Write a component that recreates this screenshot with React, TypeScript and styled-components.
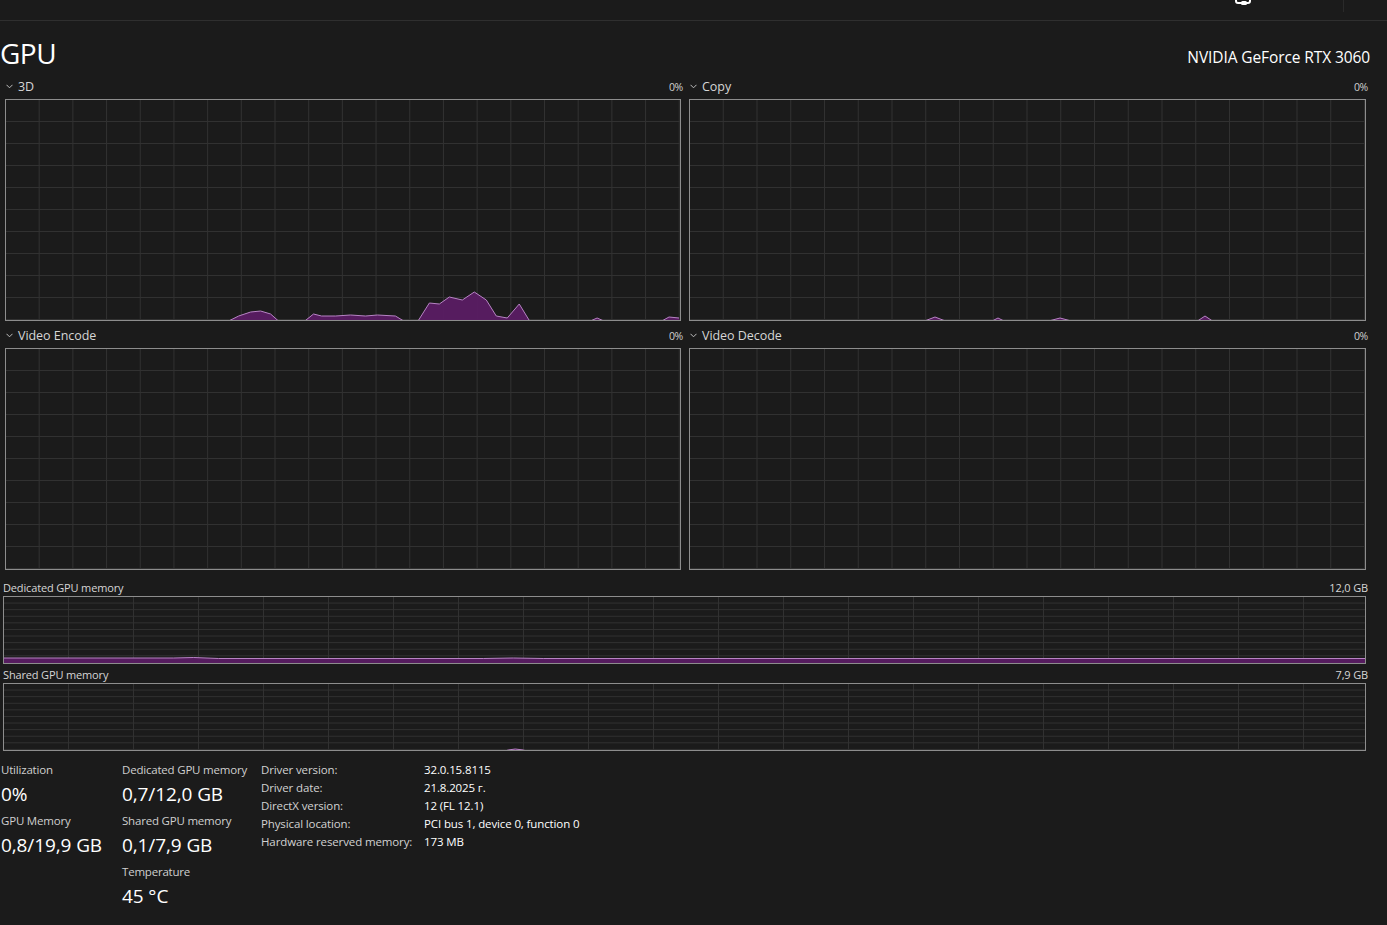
import React from "react";
import styled, { createGlobalStyle } from "styled-components";

const GlobalStyle = createGlobalStyle`
  html, body { margin: 0; padding: 0; background: #1b1b1b; }
  body { font-family: "Open Sans", "Noto Sans", "DejaVu Sans", sans-serif; color: #ffffff; }
  * { box-sizing: border-box; }
`;

const Page = styled.div`
  width: 1387px;
  min-height: 925px;
  background: #1b1b1b;
  overflow: hidden;
`;

const TopBar = styled.div`
  height: 21px;
  border-bottom: 1px solid #2f2f2f;
  display: flex;
  justify-content: flex-end;
  align-items: flex-start;
  overflow: hidden;
  padding-right: 43px;
`;

const TopIcon = styled.svg`
  margin-top: -12px;
  margin-right: 90px;
`;

const TopSep = styled.div`
  width: 1px;
  height: 12px;
  background: #2a2a2a;
`;

const TitleRow = styled.div`
  height: 51px;
  display: flex;
  justify-content: space-between;
  align-items: flex-end;
  padding-right: 17px;
  padding-bottom: 1px;
`;

const Title = styled.div`
  font-size: 28px;
  font-weight: 400;
  line-height: 36px;
  color: #ffffff;
  letter-spacing: -0.5px;
`;

const Model = styled.div`
  font-size: 15.5px;
  line-height: 22px;
  color: #ffffff;
  margin-bottom: 3px;
  letter-spacing: -0.1px;
`;

const EngineGrid = styled.div`
  display: grid;
  grid-template-columns: 678px 679px;
  column-gap: 6px;
  padding-left: 5px;
`;

const Panel = styled.div`
  display: flex;
  flex-direction: column;
`;

const PanelHead = styled.div`
  height: 27px;
  display: flex;
  align-items: center;
  justify-content: space-between;
  padding-left: 1px;
  padding-top: 2px;
`;

const HeadLeft = styled.div`
  display: flex;
  align-items: center;
  gap: 5px;
  font-size: 12.5px;
  color: #d6d6d6;
  letter-spacing: -0.05px;
`;

const Pct = styled.span`
  font-size: 10.5px;
  color: #cfcfcf;
  letter-spacing: -0.3px;
`;

const GraphBox = styled.div<{ $h: number; $cols: string; $rows: string }>`
  height: ${(p) => p.$h}px;
  margin-right: 2px;
  border: 1px solid #8d8d8d;
  background-color: #1b1b1b;
  background-image: linear-gradient(to right, #313131 1px, transparent 1px),
    linear-gradient(to bottom, #313131 1px, transparent 1px);
  background-size: ${(p) => p.$cols} ${(p) => p.$rows};
  background-position: -1px -1px;
  display: flex;
`;

const Plot = styled.svg`
  width: 100%;
  height: 100%;
  display: block;
`;

const MemSection = styled.div`
  margin-top: 7px;
  padding-left: 3px;
  padding-right: 19px;
  display: flex;
  flex-direction: column;
`;

const MemHead = styled.div`
  height: 19px;
  padding-top: 2px;
  display: flex;
  align-items: center;
  justify-content: space-between;
  font-size: 11px;
  color: #d6d6d6;
  letter-spacing: -0.15px;
`;

const Stats = styled.div`
  margin-top: 11px;
  padding-left: 1px;
  display: flex;
  align-items: flex-start;
`;

const StatCol = styled.div<{ $w: number }>`
  width: ${(p) => p.$w}px;
  display: flex;
  flex-direction: column;
  gap: 5px;
`;

const StatBlock = styled.div`
  display: flex;
  flex-direction: column;
`;

const StatLabel = styled.div`
  font-size: 11.5px;
  line-height: 16px;
  color: #cfcfcf;
  white-space: nowrap;
  letter-spacing: -0.2px;
`;

const StatValue = styled.div`
  font-size: 19px;
  line-height: 28px;
  margin-top: 2px;
  color: #ffffff;
  white-space: nowrap;
  letter-spacing: -0.1px;
`;

const Details = styled.div`
  display: grid;
  grid-template-columns: 163px auto;
  font-size: 11.5px;
  line-height: 18px;
  color: #d2d2d2;
  margin-top: -1px;
  letter-spacing: -0.12px;
`;

const DetailValue = styled.span`
  color: #ffffff;
`;

type Pt = [number, number];

const Chevron = () => (
  <svg width="7" height="5" viewBox="0 0 7 5">
    <path d="M0.5 0.8 L3.5 3.8 L6.5 0.8" fill="none" stroke="#bdbdbd" strokeWidth="1" />
  </svg>
);

function Series({ w, h, pts, base }: { w: number; h: number; pts: Pt[]; base?: number }) {
  const b = base ?? h + 2;
  const line = pts.map((p) => p.join(",")).join(" ");
  const area = `0,${b} ${line} ${w},${b}`;
  return (
    <Plot viewBox={`0 0 ${w} ${h}`} preserveAspectRatio="none">
      <polygon points={area} fill="#5a1c63" opacity="0.95" />
      <polyline points={line} fill="none" stroke="#b783c4" strokeWidth="1" vectorEffect="non-scaling-stroke" />
    </Plot>
  );
}

const B = 222;
const d3: Pt[] = [
  [0, B], [221, B], [233, 216], [245, 212], [255, 211], [265, 214], [274, B],
  [298, B], [308, 214], [316, 216], [330, 216], [345, 215], [360, 216], [372, 215], [390, 216], [400, B],
  [412, B], [424, 203], [434, 204], [444, 197], [457, 200], [469, 192], [481, 200], [491, 216], [502, 218], [514, 204], [525, B],
  [583, B], [592, 218], [601, B],
  [655, B], [664, 217], [674, 218],
];

const copy: Pt[] = [
  [0, B], [232, B], [245, 217], [258, B],
  [300, B], [308, 218], [316, B],
  [355, B], [370, 218], [385, B],
  [506, B], [515, 216], [524, B], [675, B],
];

const emptyPts: Pt[] = [[0, B], [675, B]];

const dedicated: Pt[] = [
  [0, 61], [170, 61], [190, 60.5], [215, 61.5], [480, 61.5], [510, 61], [540, 61.5], [1363, 61.5],
];

const shared: Pt[] = [
  [0, 69], [495, 69], [505, 66], [512, 65], [520, 66], [530, 69], [1363, 69],
];

const engines = [
  { name: "3D", pts: d3 },
  { name: "Copy", pts: copy },
  { name: "Video Encode", pts: emptyPts },
  { name: "Video Decode", pts: emptyPts },
];

const details: [string, string][] = [
  ["Driver version:", "32.0.15.8115"],
  ["Driver date:", "21.8.2025 г."],
  ["DirectX version:", "12 (FL 12.1)"],
  ["Physical location:", "PCI bus 1, device 0, function 0"],
  ["Hardware reserved memory:", "173 MB"],
];

export default function App() {
  return (
    <Page>
      <GlobalStyle />
      <TopBar>
        <TopIcon width="20" height="18" viewBox="0 0 20 18">
          <rect x="3" y="2" width="14" height="13" rx="2" fill="none" stroke="#ffffff" strokeWidth="2" />
          <rect x="8" y="13" width="6" height="4" rx="1.5" fill="#ffffff" />
        </TopIcon>
        <TopSep />
      </TopBar>
      <TitleRow>
        <Title>GPU</Title>
        <Model>NVIDIA GeForce RTX 3060</Model>
      </TitleRow>
      <EngineGrid>
        {engines.map((e) => (
          <Panel key={e.name}>
            <PanelHead>
              <HeadLeft>
                <Chevron />
                {e.name}
              </HeadLeft>
              <Pct>0%</Pct>
            </PanelHead>
            <GraphBox $h={222} $cols="5%" $rows="10%">
              <Series w={675} h={220} pts={e.pts} base={B} />
            </GraphBox>
          </Panel>
        ))}
      </EngineGrid>
      <MemSection>
        <MemHead>
          <span>Dedicated GPU memory</span>
          <span>12,0 GB</span>
        </MemHead>
        <GraphBox $h={68} $cols="65px" $rows="10%">
          <Series w={1363} h={66} pts={dedicated} base={69} />
        </GraphBox>
        <MemHead>
          <span>Shared GPU memory</span>
          <span>7,9 GB</span>
        </MemHead>
        <GraphBox $h={68} $cols="65px" $rows="10%">
          <Series w={1363} h={66} pts={shared} base={69} />
        </GraphBox>
      </MemSection>
      <Stats>
        <StatCol $w={121}>
          <StatBlock>
            <StatLabel>Utilization</StatLabel>
            <StatValue>0%</StatValue>
          </StatBlock>
          <StatBlock>
            <StatLabel>GPU Memory</StatLabel>
            <StatValue>0,8/19,9 GB</StatValue>
          </StatBlock>
        </StatCol>
        <StatCol $w={139}>
          <StatBlock>
            <StatLabel>Dedicated GPU memory</StatLabel>
            <StatValue>0,7/12,0 GB</StatValue>
          </StatBlock>
          <StatBlock>
            <StatLabel>Shared GPU memory</StatLabel>
            <StatValue>0,1/7,9 GB</StatValue>
          </StatBlock>
          <StatBlock>
            <StatLabel>Temperature</StatLabel>
            <StatValue>45 °C</StatValue>
          </StatBlock>
        </StatCol>
        <Details>
          {details.map(([k, v]) => (
            <React.Fragment key={k}>
              <span>{k}</span>
              <DetailValue>{v}</DetailValue>
            </React.Fragment>
          ))}
        </Details>
      </Stats>
    </Page>
  );
}
